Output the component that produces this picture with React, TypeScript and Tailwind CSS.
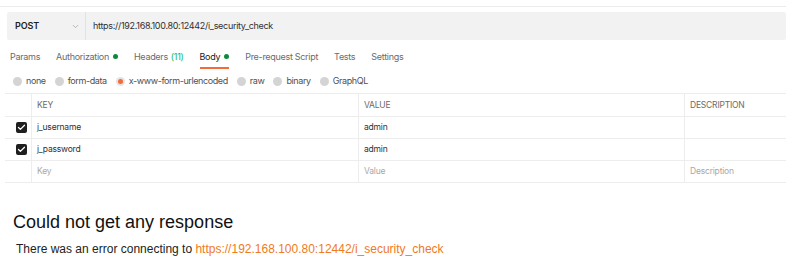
import { ChevronDown, Check } from "lucide-react";

const tabs = [
  { label: "Params" },
  { label: "Authorization", dot: true },
  { label: "Headers", count: "(11)" },
  { label: "Body", dot: true, active: true },
  { label: "Pre-request Script" },
  { label: "Tests" },
  { label: "Settings" },
];

const bodyTypes = ["none", "form-data", "x-www-form-urlencoded", "raw", "binary", "GraphQL"];

const rows = [
  { key: "j_username", value: "admin" },
  { key: "j_password", value: "admin" },
];

export default function App() {
  return (
    <div className="w-[800px] h-[265px] bg-white overflow-hidden font-['Inter',sans-serif] text-[#212121]">
      {/* top divider */}
      <div className="mt-[6px] w-[786px] h-px bg-[#ececec]" />

      {/* Request bar */}
      <div className="ml-[7px] mt-[5px] w-[779px] h-[28px] flex items-center bg-[#f2f2f2] rounded-[2px]">
        <div className="w-[79px] h-full flex items-center justify-between pl-[8px] pr-[5px] border-r border-[#e2e2e2]">
          <span className="text-[9px] font-semibold tracking-[-0.1px]">POST</span>
          <ChevronDown className="w-[9px] h-[9px] text-[#8a8a8a]" strokeWidth={1.5} />
        </div>
        <span className="ml-[7px] text-[9px] tracking-[-0.3px] text-[#303030]">https://192.168.100.80:12442/i_security_check</span>
      </div>

      {/* Tabs */}
      <div className="ml-[10px] mt-[10px] flex items-start gap-[16px] h-[18px] text-[9px] tracking-[-0.3px] text-[#6b6b6b]">
        {tabs.map((t) => (
          <div key={t.label} className="flex flex-col">
            <div className={`flex items-center gap-[4px] ${t.active ? "text-[#212121]" : ""}`}>
              <span>{t.label}</span>
              {t.count && <span className="text-[#0cbb52] -ml-[1px]">{t.count}</span>}
              {t.dot && <span className="w-[5px] h-[5px] rounded-full bg-[#0b8a3c]" />}
            </div>
            {t.active && <div className="mt-[3px] h-[2px] w-[29px] bg-[#f26b3a]" />}
          </div>
        ))}
      </div>

      {/* Body types */}
      <div className="ml-[13px] mt-[6px] flex items-center gap-[9px] h-[14px] text-[9px] tracking-[-0.4px] text-[#505050]">
        {bodyTypes.map((b) => {
          const selected = b === "x-www-form-urlencoded";
          return (
            <div key={b} className="flex items-center gap-[4px]">
              {selected ? (
                <span className="w-[9px] h-[9px] rounded-full bg-[#e3e3e3] flex items-center justify-center">
                  <span className="w-[5px] h-[5px] rounded-full bg-[#f26b3a]" />
                </span>
              ) : (
                <span className="w-[9px] h-[9px] rounded-full bg-[#d4d4d4]" />
              )}
              <span>{b}</span>
            </div>
          );
        })}
      </div>

      {/* Table */}
      <div className="ml-[5px] mt-[5px] w-[781px] border-t border-[#ededed] text-[8.5px] tracking-[-0.2px]">
        <div className="flex h-[23px] border-b border-[#ededed] text-[#6b6b6b]">
          <div className="w-[27px] border-r border-[#ededed]" />
          <div className="w-[327px] border-r border-[#ededed] pl-[5px] flex items-center">KEY</div>
          <div className="w-[326px] border-r border-[#ededed] pl-[5px] flex items-center">VALUE</div>
          <div className="flex-1 pl-[5px] flex items-center">DESCRIPTION</div>
        </div>
        {rows.map((r) => (
          <div key={r.key} className="flex h-[22px] border-b border-[#ededed] text-[#303030]">
            <div className="w-[27px] border-r border-[#ededed] flex items-center justify-end pr-[4px]">
              <span className="w-[11px] h-[11px] rounded-[2px] bg-[#1f1f1f] flex items-center justify-center">
                <Check className="w-[9px] h-[9px] text-white" strokeWidth={3.5} />
              </span>
            </div>
            <div className="w-[327px] border-r border-[#ededed] pl-[5px] flex items-center">{r.key}</div>
            <div className="w-[326px] border-r border-[#ededed] pl-[5px] flex items-center">{r.value}</div>
            <div className="flex-1" />
          </div>
        ))}
        <div className="flex h-[22px] border-b border-[#ededed] text-[#a8a8a8]">
          <div className="w-[27px] border-r border-[#ededed]" />
          <div className="w-[327px] border-r border-[#ededed] pl-[5px] flex items-center">Key</div>
          <div className="w-[326px] border-r border-[#ededed] pl-[5px] flex items-center">Value</div>
          <div className="flex-1 pl-[5px] flex items-center">Description</div>
        </div>
      </div>

      {/* Response */}
      <div className="font-['Liberation_Sans',Arial,sans-serif]">
        <div className="ml-[13px] mt-[29px] text-[18px] leading-[20px] text-[#111]">Could not get any response</div>
        <div className="ml-[16px] mt-[10px] text-[12px] leading-[14px] text-[#222]">
          There was an error connecting to{" "}
          <span className="text-[#f07a1e]">https://192.168.100.80:12442/i_security_check</span>
        </div>
      </div>
    </div>
  );
}
